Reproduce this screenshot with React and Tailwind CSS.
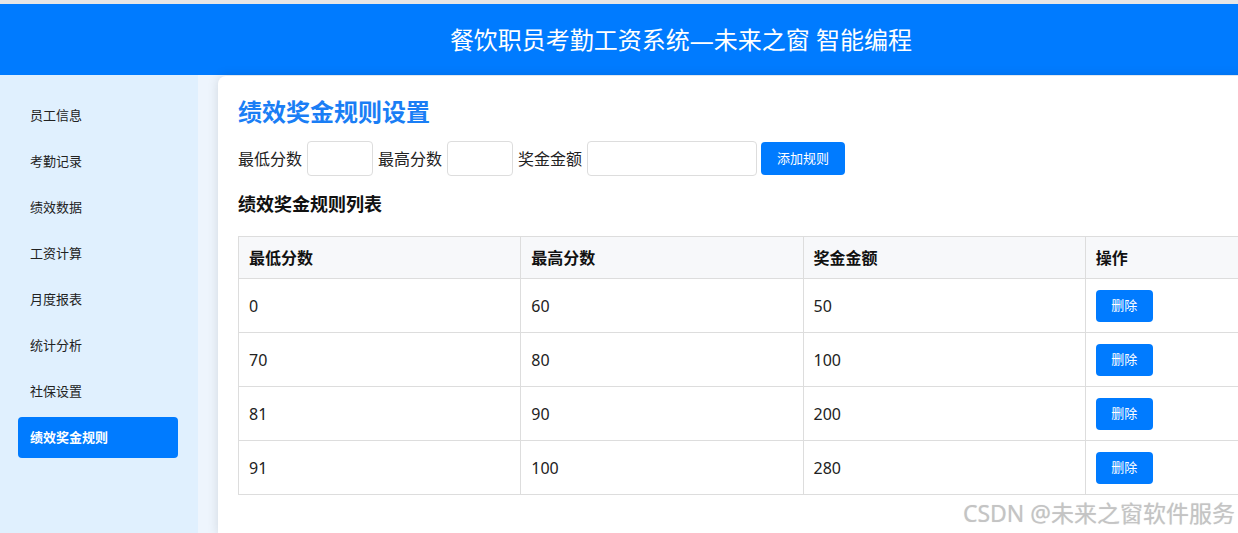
import React from 'react';

const menu = ['员工信息', '考勤记录', '绩效数据', '工资计算', '月度报表', '统计分析', '社保设置', '绩效奖金规则'];

const rules = [
  { min: 0, max: 60, bonus: 50 },
  { min: 70, max: 80, bonus: 100 },
  { min: 81, max: 90, bonus: 200 },
  { min: 91, max: 100, bonus: 280 },
];

const font = { fontFamily: '"Noto Sans", "Noto Sans CJK SC", sans-serif' };

export default function App() {
  return (
    <div className="w-screen h-[533px] overflow-hidden relative bg-white" style={font}>
      <div className="w-[1362px] border-t-4 border-[#e6e6e6]">
        <header className="h-[71px] bg-[#007bff] flex items-center justify-center">
          <h1 className="text-[24px] text-white">餐饮职员考勤工资系统—未来之窗 智能编程</h1>
        </header>

        <div className="flex h-[460px]">
          <aside className="w-[198px] shrink-0 bg-[#e0f0fe] pl-[18px] pr-[20px] pt-[20px]">
            <ul className="flex flex-col gap-[5px]">
              {menu.map((item, i) => {
                const active = i === menu.length - 1;
                return (
                  <li
                    key={item}
                    className={
                      active
                        ? 'h-[41px] flex items-center px-3 rounded bg-[#007bff] text-white text-[13px] font-bold'
                        : 'h-[41px] flex items-center px-3 text-[13px] text-[#222]'
                    }
                  >
                    {item}
                  </li>
                );
              })}
            </ul>
          </aside>

          <main className="flex-1 bg-[#eef5fd] pl-[20px] pt-px">
            <div className="h-full bg-white rounded-tl-lg shadow-[0_0_12px_rgba(0,0,0,0.12)] px-[20px] pt-[20px]">
              <h2 className="text-2xl leading-8 font-bold text-[#1a7ef5]">绩效奖金规则设置</h2>

              <div className="mt-[13px] flex items-center gap-[5px] text-[16px] text-[#222]">
                <span>最低分数</span>
                <input className="w-[66px] h-[35px] border border-[#ddd] rounded" />
                <span>最高分数</span>
                <input className="w-[66px] h-[35px] border border-[#ddd] rounded" />
                <span>奖金金额</span>
                <input className="w-[170px] h-[35px] border border-[#ddd] rounded" />
                <button className="ml-[-1px] w-[84px] h-[33px] rounded bg-[#007bff] text-white text-[13px]">
                  添加规则
                </button>
              </div>

              <h3 className="mt-[15px] text-[18px] leading-[27px] font-bold text-[#111]">绩效奖金规则列表</h3>

              <table className="mt-[18px] w-[1130px] border-collapse table-fixed text-[16px] text-[#222]">
                <thead>
                  <tr className="bg-[#f7f8fa]">
                    {['最低分数', '最高分数', '奖金金额', '操作'].map((h) => (
                      <th key={h} className="h-[42px] border border-[#ddd] px-[10px] text-left font-bold text-[#111]">
                        {h}
                      </th>
                    ))}
                  </tr>
                </thead>
                <tbody>
                  {rules.map((r) => (
                    <tr key={r.min}>
                      <td className="h-[54px] border border-[#ddd] px-[10px]">{r.min}</td>
                      <td className="h-[54px] border border-[#ddd] px-[10px]">{r.max}</td>
                      <td className="h-[54px] border border-[#ddd] px-[10px]">{r.bonus}</td>
                      <td className="h-[54px] border border-[#ddd] px-[10px]">
                        <button className="w-[57px] h-[32px] rounded bg-[#007bff] text-white text-[13px]">删除</button>
                      </td>
                    </tr>
                  ))}
                </tbody>
              </table>
            </div>
          </main>
        </div>
      </div>

      <div className="absolute right-[3px] bottom-[3px] text-[23px] text-[#c4c4c4] [text-shadow:0_0_1px_rgba(0,0,0,0.15)]">
        CSDN @未来之窗软件服务
      </div>
    </div>
  );
}
